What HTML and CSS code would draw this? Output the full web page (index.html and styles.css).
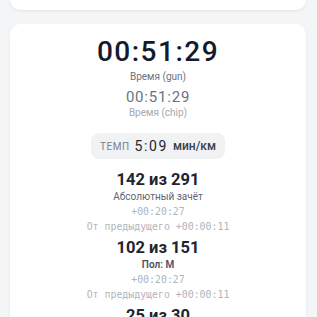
FILE: index.html
```html
<!DOCTYPE html>
<html lang="ru">
<head>
<meta charset="utf-8">
<link rel="stylesheet" href="styles.css">
</head>
<body>
<div class="page">
  <div class="card card-prev"></div>
  <div class="card result">
    <div class="time-main">00:51:29</div>
    <div class="label">Время (gun)</div>
    <div class="time-chip">00:51:29</div>
    <div class="label label-light">Время (chip)</div>
    <div class="pace">
      <span class="pace-title">ТЕМП</span>
      <span class="pace-value">5:09</span>
      <span class="pace-unit">мин/км</span>
    </div>
    <div class="ranks">
      <div class="rank">
        <div class="rank-place">142 из 291</div>
        <div class="rank-label">Абсолютный зачёт</div>
        <div class="mono">+00:20:27</div>
        <div class="mono">От предыдущего +00:00:11</div>
      </div>
      <div class="rank">
        <div class="rank-place">102 из 151</div>
        <div class="rank-label rank-label-strong">Пол: М</div>
        <div class="mono">+00:20:27</div>
        <div class="mono">От предыдущего +00:00:11</div>
      </div>
      <div class="rank">
        <div class="rank-place">25 из 30</div>
        <div class="rank-label">Возрастная группа</div>
      </div>
    </div>
  </div>
</div>
</body>
</html>
```
FILE: styles.css
```css
html, body {
  margin: 0;
  padding: 0;
  background: #f4f5f7;
  overflow: hidden;
}
body {
  font-family: Roboto, "Noto Sans", sans-serif;
  color: #1b2030;
}
.page {
  display: flex;
  flex-direction: column;
  gap: 14px;
  padding: 0 11px 0 10px;
}
.card {
  background: #fff;
  border-radius: 10px;
  box-shadow: 0 1px 3px rgba(20, 30, 50, 0.08);
}
.card-prev {
  height: 40px;
  margin-top: -30px;
}
.result {
  display: flex;
  flex-direction: column;
  align-items: center;
  padding-top: 11px;
  padding-bottom: 20px;
}
.time-main {
  font-size: 28px;
  line-height: 34px;
  font-weight: 500;
  letter-spacing: 1.5px;
  color: #151b2b;
}
.label {
  font-size: 10px;
  line-height: 14px;
  color: #6b7280;
  margin-top: 1px;
}
.label-light {
  color: #a4a9b1;
  margin-top: 0;
}
.time-chip {
  font-size: 15px;
  line-height: 18px;
  letter-spacing: 0.8px;
  color: #6b7280;
  margin-top: 3.5px;
}
.pace {
  margin-top: 13.5px;
  height: 26px;
  padding: 0 9px;
  background: #f1f2f4;
  border-radius: 8px;
  display: flex;
  align-items: center;
  gap: 5px;
}
.pace-title {
  font-size: 10px;
  letter-spacing: 0.5px;
  color: #7a808a;
}
.pace-value {
  font-size: 14px;
  font-weight: 400;
  letter-spacing: 1.6px;
  color: #1f2430;
}
.pace-unit {
  font-size: 12px;
  font-weight: 500;
  color: #3a3f4a;
}
.ranks {
  margin-top: 7px;
  display: flex;
  flex-direction: column;
  align-items: center;
}
.rank {
  margin-top: 4px;
  display: flex;
  flex-direction: column;
  align-items: center;
}
.rank-place {
  font-size: 16.5px;
  line-height: 20px;
  font-weight: 700;
  color: #1f2430;
}
.rank-label {
  font-size: 10px;
  line-height: 14px;
  color: #5f6570;
}
.rank-label-strong {
  font-weight: 600;
  color: #4b515c;
}
.mono {
  font-family: "DejaVu Sans Mono", "Liberation Mono", monospace;
  font-size: 9.9px;
  line-height: 15px;
  color: #b0b5bc;
}
```
